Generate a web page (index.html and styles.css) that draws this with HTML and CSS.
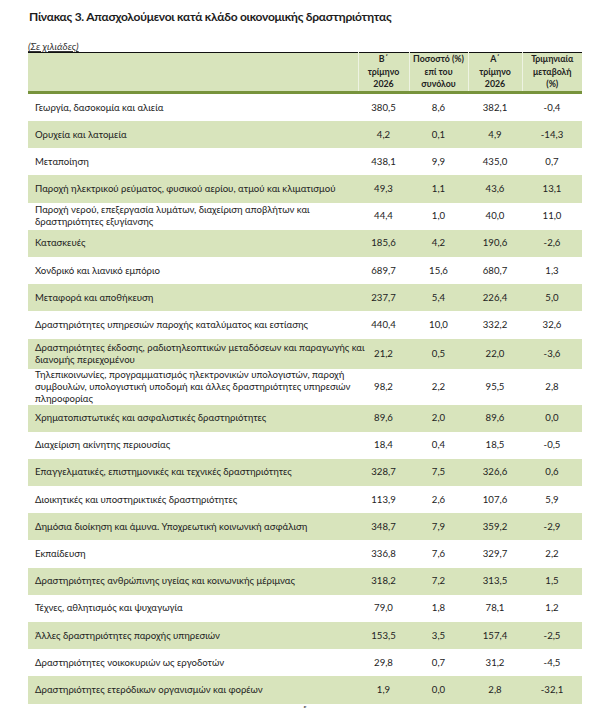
FILE: index.html
```html
<!DOCTYPE html>
<html lang="el">
<head>
    <meta charset="UTF-8">
    <title>Πίνακας 3</title>
    <link rel="stylesheet" href="styles.css">
</head>
<body>
    <div class="page">
        <h1 class="title">Πίνακας 3. Απασχολούμενοι κατά κλάδο οικονομικής δραστηριότητας</h1>
        <div class="unit">(Σε χιλιάδες)</div>

        <table class="data">
            <colgroup>
                <col class="c-label">
                <col class="c-b">
                <col class="c-pct">
                <col class="c-a">
                <col class="c-chg">
            </colgroup>
            <thead>
                <tr>
                    <th></th>
                    <th>Β΄<br>τρίμηνο<br>2026</th>
                    <th>Ποσοστό (%)<br>επί του<br>συνόλου</th>
                    <th>Α΄<br>τρίμηνο<br>2026</th>
                    <th>Τριμηνιαία<br>μεταβολή<br>(%)</th>
                </tr>
            </thead>
            <tbody>
                <tr class="first"><td>Γεωργία, δασοκομία και αλιεία</td><td>380,5</td><td>8,6</td><td>382,1</td><td>-0,4</td></tr>
                <tr><td>Ορυχεία και λατομεία</td><td>4,2</td><td>0,1</td><td>4,9</td><td>-14,3</td></tr>
                <tr><td>Μεταποίηση</td><td>438,1</td><td>9,9</td><td>435,0</td><td>0,7</td></tr>
                <tr><td>Παροχή ηλεκτρικού ρεύματος, φυσικού αερίου, ατμού και κλιματισμού</td><td>49,3</td><td>1,1</td><td>43,6</td><td>13,1</td></tr>
                <tr><td>Παροχή νερού, επεξεργασία λυμάτων, διαχείριση αποβλήτων και<br>δραστηριότητες εξυγίανσης</td><td>44,4</td><td>1,0</td><td>40,0</td><td>11,0</td></tr>
                <tr><td>Κατασκευές</td><td>185,6</td><td>4,2</td><td>190,6</td><td>-2,6</td></tr>
                <tr><td>Χονδρικό και λιανικό εμπόριο</td><td>689,7</td><td>15,6</td><td>680,7</td><td>1,3</td></tr>
                <tr><td>Μεταφορά και αποθήκευση</td><td>237,7</td><td>5,4</td><td>226,4</td><td>5,0</td></tr>
                <tr><td>Δραστηριότητες υπηρεσιών παροχής καταλύματος και εστίασης</td><td>440,4</td><td>10,0</td><td>332,2</td><td>32,6</td></tr>
                <tr class="two"><td>Δραστηριότητες έκδοσης, ραδιοτηλεοπτικών μεταδόσεων και παραγωγής και<br>διανομής περιεχομένου</td><td>21,2</td><td>0,5</td><td>22,0</td><td>-3,6</td></tr>
                <tr class="three"><td>Τηλεπικοινωνίες, προγραμματισμός ηλεκτρονικών υπολογιστών, παροχή<br>συμβουλών, υπολογιστική υποδομή και άλλες δραστηριότητες υπηρεσιών<br>πληροφορίας</td><td>98,2</td><td>2,2</td><td>95,5</td><td>2,8</td></tr>
                <tr><td>Χρηματοπιστωτικές και ασφαλιστικές δραστηριότητες</td><td>89,6</td><td>2,0</td><td>89,6</td><td>0,0</td></tr>
                <tr><td>Διαχείριση ακίνητης περιουσίας</td><td>18,4</td><td>0,4</td><td>18,5</td><td>-0,5</td></tr>
                <tr><td>Επαγγελματικές, επιστημονικές και τεχνικές δραστηριότητες</td><td>328,7</td><td>7,5</td><td>326,6</td><td>0,6</td></tr>
                <tr><td>Διοικητικές και υποστηρικτικές δραστηριότητες</td><td>113,9</td><td>2,6</td><td>107,6</td><td>5,9</td></tr>
                <tr><td>Δημόσια διοίκηση και άμυνα. Υποχρεωτική κοινωνική ασφάλιση</td><td>348,7</td><td>7,9</td><td>359,2</td><td>-2,9</td></tr>
                <tr><td>Εκπαίδευση</td><td>336,8</td><td>7,6</td><td>329,7</td><td>2,2</td></tr>
                <tr><td>Δραστηριότητες ανθρώπινης υγείας και κοινωνικής μέριμνας</td><td>318,2</td><td>7,2</td><td>313,5</td><td>1,5</td></tr>
                <tr><td>Τέχνες, αθλητισμός και ψυχαγωγία</td><td>79,0</td><td>1,8</td><td>78,1</td><td>1,2</td></tr>
                <tr><td>Άλλες δραστηριότητες παροχής υπηρεσιών</td><td>153,5</td><td>3,5</td><td>157,4</td><td>-2,5</td></tr>
                <tr><td>Δραστηριότητες νοικοκυριών ως εργοδοτών</td><td>29,8</td><td>0,7</td><td>31,2</td><td>-4,5</td></tr>
                <tr><td>Δραστηριότητες ετερόδικων οργανισμών και φορέων</td><td>1,9</td><td>0,0</td><td>2,8</td><td>-32,1</td></tr>
            </tbody>
        </table>

        <div class="page-num">5</div>
    </div>
</body>
</html>
```

FILE: styles.css
```css
body {
    margin: 0;
    background-color: #fff;
    color: #222;
    font-family: Lato, "Open Sans", sans-serif;
}
.page {
    padding: 9px 27px 0 28px;
}
.title {
    margin: 0 0 0 1px;
    font-size: 12px;
    font-weight: bold;
    letter-spacing: -0.25px;
    line-height: 16px;
    color: #1c1c1c;
}
.unit {
    margin-top: 16px;
    font-size: 10px;
    font-style: italic;
    text-decoration: underline;
    line-height: 11px;
    color: #333;
}
.data {
    width: 554px;
    table-layout: fixed;
    border-collapse: collapse;
    font-size: 9.6px;
}
.c-label { width: 330px; }
.c-b { width: 51px; }
.c-pct { width: 59px; }
.c-a { width: 54px; }
.c-chg { width: 60px; }
.data thead tr {
    background-color: #d8e4bc;
    border-top: 1px solid #111;
    border-bottom: 3px solid #77933c;
}
.data th {
    height: 38px;
    padding: 0;
    font-size: 8.8px;
    font-weight: bold;
    line-height: 12.5px;
    text-align: center;
    border-left: 1px solid #eef3e2;
}
.data th:first-child {
    border-left: none;
}
.data td {
    height: 27.2px;
    padding: 0 4px;
    line-height: 12px;
    text-align: center;
    vertical-align: middle;
    white-space: nowrap;
}
.data td:first-child {
    padding-left: 7px;
    text-align: left;
}
.data tbody tr:nth-child(even) {
    background-color: #d8e4bc;
}
.data tr.first td {
    height: 27px;
}
.data tr.two td {
    height: 30px;
}
.data tr.three td {
    height: 36px;
}
.page-num {
    width: 554px;
    text-align: center;
    font-size: 6px;
    line-height: 7px;
}
```
